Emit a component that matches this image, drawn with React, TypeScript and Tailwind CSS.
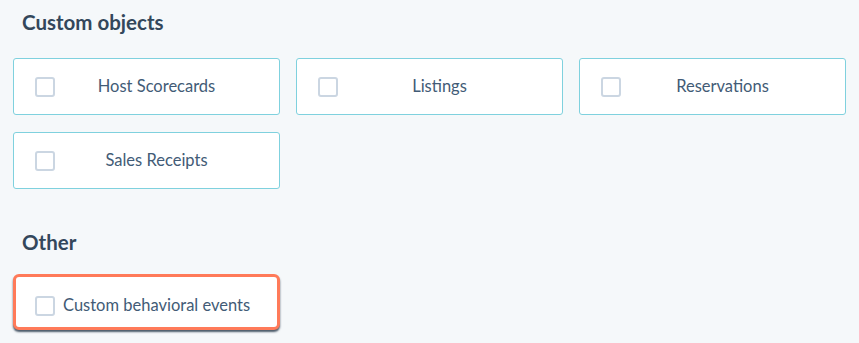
import React from "react";

const customObjects = ["Host Scorecards", "Listings", "Reservations", "Sales Receipts"];

function Checkbox() {
  return <span className="block h-5 w-5 shrink-0 rounded-[3px] border-2 border-[#cbd6e2] bg-white" />;
}

function ObjectCard({ label }: { label: string }) {
  return (
    <label className="flex h-[57px] items-center rounded-[3px] border border-[#7fd1de] bg-white pl-[21px] pr-[21px]">
      <Checkbox />
      <span className="flex-1 text-center text-[16.5px] text-[#425b76]">{label}</span>
    </label>
  );
}

export default function App() {
  return (
    <div
      className="min-h-[343px] w-[859px] bg-[#f5f8fa] px-[13px] pt-[8px]"
      style={{ fontFamily: "Lato, 'Noto Sans', sans-serif" }}
    >
      <h2 className="pl-[9px] text-[20.5px] font-bold leading-[28px] text-[#33475b]">Custom objects</h2>
      <div className="mt-[22px] grid grid-cols-3 gap-x-4 gap-y-[17px]">
        {customObjects.map((name) => (
          <ObjectCard key={name} label={name} />
        ))}
      </div>
      <h2 className="mt-[39px] pl-[9px] text-[20.5px] font-bold leading-[28px] text-[#33475b]">Other</h2>
      <div className="mt-[18px] w-[267px]">
        <label className="flex h-[56px] items-center gap-[8px] rounded-[6px] border-[3px] border-[#ff7a59] bg-white pl-[19px] pt-[7px] shadow-[0_2px_2px_rgba(45,62,80,0.85)]">
          <Checkbox />
          <span className="text-[16.5px] text-[#425b76]">Custom behavioral events</span>
        </label>
      </div>
    </div>
  );
}
